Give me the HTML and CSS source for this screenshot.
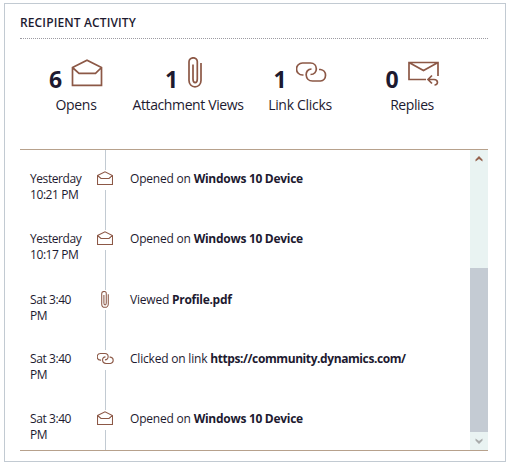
FILE: index.html
```html
<!DOCTYPE html>
<html lang="en">
<head>
<meta charset="utf-8">
<title>Recipient activity</title>
<link rel="stylesheet" href="styles.css">
</head>
<body>
<svg class="defs" width="0" height="0">
  <symbol id="envelope" viewBox="0 0 32 28"><path d="M1.5 8.500 16 1.200 30.500 8.500V26.300H1.500ZM1.500 8.500 8 14.300H24.500L30.500 8.500"/></symbol>
  <symbol id="envelope-small" viewBox="0 0 16 15"><path d="M.5 4.500 8 .8 15.500 4.500V13.500H.5ZM.5 4.500 4 7.500H12L15.500 4.500"/></symbol>
  <symbol id="clip" viewBox="0 0 14 31"><path d="M9.300 22V4.500C9.300 2.200 7.500.8 5.300.8S1 2.200 1 4.800V23.500C1 27 3.500 29.800 7 29.800S13 27 13 23.500V6M5 7.500V22C5 26.800 9.300 26.800 9.300 22"/></symbol>
  <symbol id="link" viewBox="0 0 31 20"><path d="M7.500 13H6.500A6 6 0 0 1 6.500 1H14.500C22 1 22.500 12.500 14.500 12.500M15.500 7C8 7 8.500 19 16.500 19H24.500A5.800 5.800 0 0 0 24.500 7.500H23"/></symbol>
</svg>
<section class="card">
  <h1 class="title">RECIPIENT ACTIVITY</h1>
  <div class="summary">
    <div class="stat"><div class="figure"><b>6</b><svg class="icon big-envelope"><use href="#envelope"/></svg></div><span class="label">Opens</span></div>
    <div class="stat"><div class="figure"><b>1</b><svg class="icon big-clip"><use href="#clip"/></svg></div><span class="label">Attachment Views</span></div>
    <div class="stat"><div class="figure"><b>1</b><svg class="icon big-link"><use href="#link"/></svg></div><span class="label">Link Clicks</span></div>
    <div class="stat"><div class="figure"><b>0</b><svg class="icon reply" viewBox="0 0 31 26"><path d="M18 18.500H1V1.500H30V15M1 1.500 15.500 9.500 30 1.500M24 14.500 20 18.500 24 22.500M20 18.500H26C30.500 18.500 30.500 24 26.500 24"/></svg></div><span class="label">Replies</span></div>
  </div>
  <div class="history">
    <div class="timeline">
      <div class="event"><time>Yesterday<br>10:21 PM</time><div class="marker"><svg class="icon small-envelope"><use href="#envelope-small"/></svg></div><p>Opened on <b>Windows 10 Device</b></p></div>
      <div class="event"><time>Yesterday<br>10:17 PM</time><div class="marker"><svg class="icon small-envelope"><use href="#envelope-small"/></svg></div><p>Opened on <b>Windows 10 Device</b></p></div>
      <div class="event viewed"><time>Sat 3:40<br>PM</time><div class="marker"><svg class="icon small-clip"><use href="#clip"/></svg></div><p>Viewed <b>Profile.pdf</b></p></div>
      <div class="event"><time>Sat 3:40<br>PM</time><div class="marker"><svg class="icon small-link"><use href="#link"/></svg></div><p>Clicked on link <b class="url">https://community.dynamics.com/</b></p></div>
      <div class="event"><time>Sat 3:40<br>PM</time><div class="marker"><svg class="icon small-envelope"><use href="#envelope-small"/></svg></div><p>Opened on <b>Windows 10 Device</b></p></div>
    </div>
    <div class="scrollbar">
      <svg class="arrow up" viewBox="0 0 8 7"><path d="M.5 6.500V4.500L4 1 7.500 4.500V6.500L4 4Z"/></svg>
      <div class="thumb"></div>
      <svg class="arrow down" viewBox="0 0 8 7"><path d="M.5 .5V2.500L4 6 7.500 2.500V.5L4 3Z"/></svg>
    </div>
  </div>
</section>
</body>
</html>
```
FILE: styles.css
```css
* { box-sizing: border-box; }
body { margin: 0; padding: 3px 5px 4px 4px; background: #fff; color: #1d1a30; font: 12px/16px "Open Sans", "Noto Sans", sans-serif; }
.defs { display: block; }
.card { width: 502px; height: 459px; border: 1px solid #c2cad2; padding: 10px 17px 0 15px; }
.title { margin: 0; height: 25px; border-bottom: 1px dotted #9c9ba2; font-size: 12px; font-weight: 600; line-height: 17px; letter-spacing: .13px; }
.summary { display: grid; grid-template-columns: repeat(4, 112px); height: 110px; padding-top: 17px; }
.stat { display: flex; flex-direction: column; align-items: center; }
.figure { display: flex; justify-content: center; height: 36px; gap: 9px; }
.figure b { width: 13px; font-size: 23px; line-height: 32px; padding-top: 7px; }
.label { font-size: 14px; line-height: 20px; margin-top: 3px; letter-spacing: -.42px; white-space: nowrap; }
.stat:nth-child(2) .label { letter-spacing: -.38px; }
.stat:first-child .label, .stat:nth-child(3) .label { letter-spacing: -.3px; }
.icon { display: block; flex: none; fill: none; stroke: #8c5846; stroke-width: 1.7; }
.big-envelope { width: 32px; height: 28px; margin-top: 3px; }
.big-clip { width: 14px; height: 31px; margin: 1px 9px 0 1px; }
.big-link { width: 31px; height: 20px; margin-top: 6px; }
.reply { width: 31px; height: 26px; margin-top: 5px; }
.history { display: flex; height: 302px; border-top: 1px solid #b7a18c; border-bottom: 1px solid #b7a18c; }
.timeline { flex: 1; }
.event { display: grid; grid-template-columns: 65px 41px 1fr; height: 60px; padding-left: 4px; }
.event time, .event p { margin: 0; padding-top: 21px; white-space: nowrap; letter-spacing: -.2px; }
.event time { padding-left: 6px; letter-spacing: -.42px; }
.event b { letter-spacing: -.29px; }
.event .url { letter-spacing: -.41px; }
.marker { width: 32px; height: 60px; display: flex; justify-content: center; align-items: flex-start; padding-top: 21px; background: linear-gradient(#c2cad2 0 20px, transparent 20px 40px, #c2cad2 40px) 16px 0 / 1px 100% no-repeat; }
.viewed time, .viewed p { padding-top: 22px; }
.small-envelope { width: 16px; height: 15px; stroke-width: 1.1; }
.small-clip { width: 8px; height: 17px; stroke-width: 1.9; }
.small-link { width: 17px; height: 11px; margin-top: 2px; stroke-width: 2; }
.scrollbar { width: 18px; display: flex; flex-direction: column; align-items: center; background: #e9f3f2; }
.thumb { width: 18px; height: 164px; margin-top: 106px; background: #c4cbd3; }
.arrow { width: 8px; height: 7px; }
.up { margin-top: 5px; fill: #95634e; }
.down { margin-top: 6px; fill: #a9acac; }
```
